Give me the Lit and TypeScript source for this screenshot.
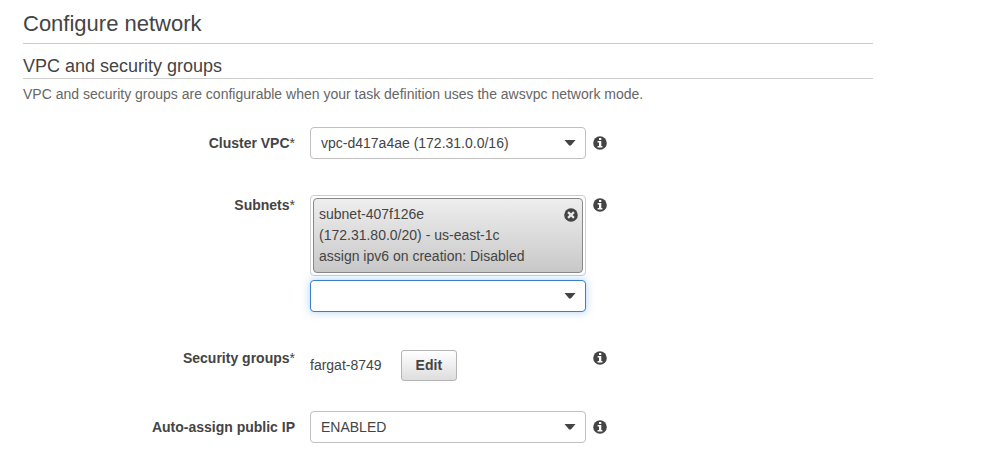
import { LitElement, html, css, svg } from "lit";
import { customElement } from "lit/decorators.js";

const infoGlyph = svg`
  <circle cx="7" cy="7" r="6.8" fill="#444"></circle>
  <path fill="#fff" d="M6 1.9h2.3v2H6zM4.6 5h3.7v5h1.1v1.6H4.6V10H6V6.6H4.6z"></path>
`;

const closeGlyph = svg`
  <circle cx="7" cy="7" r="6.8" fill="#444"></circle>
  <path stroke="#e8e8e8" stroke-width="2.2" d="M4.1 4.1l5.8 5.8M9.9 4.1l-5.8 5.8"></path>
`;

@customElement("app-root")
export class AppRoot extends LitElement {
  static styles = css`
    :host {
      display: block;
      box-sizing: border-box;
      padding: 9px 127px 24px 23px;
      font-family: "Liberation Sans", Arial, sans-serif;
      font-size: 14px;
      line-height: 21px;
      color: #444;
      background: #fff;
    }
    *,
    *::before,
    *::after {
      box-sizing: border-box;
    }
    h1,
    h2,
    p {
      margin: 0;
      font-weight: normal;
    }
    h1 {
      padding-bottom: 4px;
      border-bottom: 1px solid #ccc;
      font-size: 22px;
      line-height: 30px;
    }
    h2 {
      padding-top: 10px;
      border-bottom: 1px solid #ccc;
      font-size: 18px;
      line-height: 24px;
    }
    .description {
      margin-top: 5px;
      color: #666;
    }
    form {
      display: grid;
      gap: 36px;
      margin-top: 22px;
    }
    .row {
      display: grid;
      grid-template-columns: 272px minmax(0, 276px) 14px;
      column-gap: 15px;
      align-items: start;
    }
    .row.centered {
      align-items: center;
    }
    .pair {
      display: grid;
      gap: 30px;
    }
    .label {
      font-weight: bold;
      text-align: right;
    }
    .field {
      display: grid;
      gap: 4px;
    }
    .mark {
      font-weight: normal;
    }
    .select {
      display: grid;
      align-items: center;
    }
    .select select,
    .select svg {
      grid-area: 1 / 1;
    }
    .select svg {
      justify-self: end;
      margin-right: 10px;
      pointer-events: none;
    }
    select {
      appearance: none;
      width: 100%;
      height: 32px;
      padding: 0 32px 0 10px;
      border: 1px solid #c0c0c0;
      border-radius: 4px;
      background: #fff;
      color: #444;
      font: inherit;
      outline: none;
    }
    select.active {
      border-color: #3b7fc4;
      box-shadow: 0 0 8px rgba(100, 170, 255, 0.55);
    }
    .tags {
      padding: 2px;
      border: 1px solid #ccc;
      border-radius: 4px;
    }
    .tag {
      display: flex;
      justify-content: space-between;
      align-items: flex-start;
      padding: 5px 4px 5px 5px;
      border: 1px solid #888;
      border-radius: 4px;
      background: linear-gradient(#eee, #c8c8c8);
    }
    .tag-line {
      display: block;
    }
    .icon-button {
      display: flex;
      padding: 0;
      border: 0;
      background: none;
      cursor: pointer;
    }
    .tag .icon-button {
      margin-top: 4px;
    }
    .info {
      height: 20px;
      align-items: center;
      margin-left: -8px;
    }
    .inline {
      display: flex;
      align-items: center;
      gap: 19px;
      padding-top: 2px;
    }
    .edit {
      height: 31px;
      padding: 0 14px;
      border: 1px solid #b5b5b5;
      border-radius: 3px;
      background: linear-gradient(#fff, #ddd);
      color: #444;
      font: inherit;
      font-weight: bold;
    }
  `;

  private info(topic: string) {
    return html`<button type="button" class="icon-button info" aria-label=${"About " + topic}>
      <svg width="14" height="14" viewBox="0 0 14 14" aria-hidden="true">${infoGlyph}</svg>
    </button>`;
  }

  private dropdown(id: string, value: string, active = false) {
    return html`<div class="select">
      <select id=${id} class=${active ? "active" : ""}>
        <option>${value}</option>
      </select>
      <svg width="12" height="6" viewBox="0 0 12 6" aria-hidden="true">
        <path fill="#444" d="M.5 0h11L7.3 5q-1.3 1.3-2.6 0z"></path>
      </svg>
    </div>`;
  }

  render() {
    return html`
      <h1>Configure network</h1>
      <h2>VPC and security groups</h2>
      <p class="description">
        VPC and security groups are configurable when your task definition uses the awsvpc network
        mode.
      </p>
      <form>
        <div class="row centered">
          <label class="label" for="vpc">Cluster VPC<span class="mark">*</span></label>
          ${this.dropdown("vpc", "vpc-d417a4ae (172.31.0.0/16)")} ${this.info("cluster VPC")}
        </div>
        <div class="row">
          <label class="label" for="subnets">Subnets<span class="mark">*</span></label>
          <div class="field">
            <div class="tags">
              <div class="tag">
                <div>
                  <span class="tag-line">subnet-407f126e</span>
                  <span class="tag-line">(172.31.80.0/20) - us-east-1c</span>
                  <span class="tag-line">assign ipv6 on creation: Disabled</span>
                </div>
                <button type="button" class="icon-button" aria-label="Remove subnet">
                  <svg width="14" height="14" viewBox="0 0 14 14" aria-hidden="true">
                    ${closeGlyph}
                  </svg>
                </button>
              </div>
            </div>
            ${this.dropdown("subnets", "", true)}
          </div>
          ${this.info("subnets")}
        </div>
        <div class="pair">
          <div class="row">
            <label class="label" for="groups">Security groups<span class="mark">*</span></label>
            <div class="inline">
              <span>fargat-8749</span>
              <button type="button" class="edit" id="groups">Edit</button>
            </div>
            ${this.info("security groups")}
          </div>
          <div class="row centered">
            <label class="label" for="public-ip">Auto-assign public IP</label>
            ${this.dropdown("public-ip", "ENABLED")} ${this.info("public IP")}
          </div>
        </div>
      </form>
    `;
  }
}
